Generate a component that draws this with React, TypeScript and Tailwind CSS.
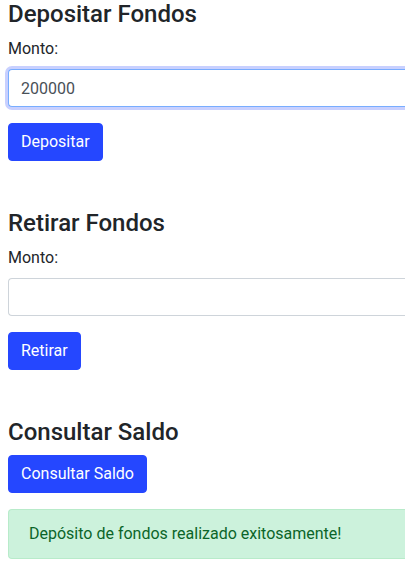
import type { ReactNode } from "react";

function Title({ children }: { children: ReactNode }) {
  return <h2 className="mb-2 text-2xl leading-[29px] font-medium">{children}</h2>;
}

function ActionButton({ children }: { children: ReactNode }) {
  return (
    <button
      type="submit"
      className="h-[38px] rounded-[4px] border border-[#2547ff] bg-[#2547ff] px-3 text-base leading-6 text-white"
    >
      {children}
    </button>
  );
}

function AmountForm({ id, title, action, value, active }: { id: string; title: string; action: string; value?: string; active?: boolean }) {
  return (
    <form className="mb-12" onSubmit={(e) => e.preventDefault()}>
      <Title>{title}</Title>
      <label htmlFor={id} className="mb-2 block leading-6">
        Monto:
      </label>
      <input
        id={id}
        type="text"
        inputMode="numeric"
        defaultValue={value}
        className={
          active
            ? "mb-4 block h-[38px] w-full rounded-l-[4px] border border-r-0 border-[#78adff] bg-white px-3 text-[#495057] shadow-[0_0_0_3px_#c8d0ff] outline-none"
            : "mb-4 block h-[38px] w-full rounded-l-[4px] border border-r-0 border-[#ced4da] bg-white px-3 text-[#495057] outline-none"
        }
      />
      <ActionButton>{action}</ActionButton>
    </form>
  );
}

export default function App() {
  return (
    <main className="overflow-hidden bg-white pl-2 font-['Roboto',sans-serif] text-base text-[#212529]">
      <AmountForm id="deposit" title="Depositar Fondos" action="Depositar" value="200000" active />
      <AmountForm id="withdraw" title="Retirar Fondos" action="Retirar" />
      <section>
        <Title>Consultar Saldo</Title>
        <ActionButton>Consultar Saldo</ActionButton>
        <p role="status" className="mt-4 rounded-l-[4px] border border-r-0 border-[#b8ebca] bg-[#ccf2dc] px-5 py-3 leading-6 text-[#0b6529]">
          Depósito de fondos realizado exitosamente!
        </p>
      </section>
    </main>
  );
}
